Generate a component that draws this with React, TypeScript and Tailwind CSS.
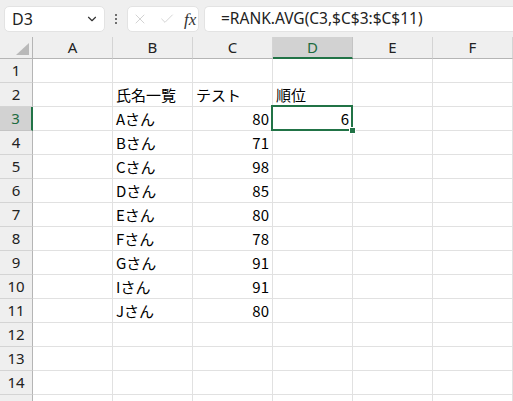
import { ChevronDown, X, Check } from 'lucide-react'

const cols = ['A', 'B', 'C', 'D', 'E', 'F']

// cells keyed by "col+row"
const cells: Record<string, { v: string; right?: boolean }> = {
  B2: { v: '氏名一覧' }, C2: { v: 'テスト' }, D2: { v: '順位' },
  B3: { v: 'Aさん' }, C3: { v: '80', right: true }, D3: { v: '6', right: true },
  B4: { v: 'Bさん' }, C4: { v: '71', right: true },
  B5: { v: 'Cさん' }, C5: { v: '98', right: true },
  B6: { v: 'Dさん' }, C6: { v: '85', right: true },
  B7: { v: 'Eさん' }, C7: { v: '80', right: true },
  B8: { v: 'Fさん' }, C8: { v: '78', right: true },
  B9: { v: 'Gさん' }, C9: { v: '91', right: true },
  B10: { v: 'Iさん' }, C10: { v: '91', right: true },
  B11: { v: 'Jさん' }, C11: { v: '80', right: true },
}

const ui = { fontFamily: '"Noto Sans", "Open Sans", sans-serif' }
const cellFont = { fontFamily: '"Noto Sans CJK JP", "Noto Sans", sans-serif' }

export default function App() {
  const rows = Array.from({ length: 15 }, (_, i) => i + 1)

  return (
    <div className="w-[513px] h-[401px] overflow-hidden bg-white text-[#222]" style={ui}>
      {/* formula bar */}
      <div className="h-[37px] bg-[#efefef] flex items-center pl-[4px] gap-[5px] pt-[1px]">
        <div className="w-[101px] h-[26px] bg-white rounded-[5px] border border-[#e3e3e3] flex items-center pl-[7px] pr-[5px]">
          <span className="text-[16px] flex-1 text-[#222]">D3</span>
          <ChevronDown className="w-[14px] h-[14px] text-[#333]" strokeWidth={2} />
        </div>
        <div className="flex flex-col gap-[2px] w-[12px] items-center">
          <span className="w-[2px] h-[2px] bg-[#444] rounded-full" />
          <span className="w-[2px] h-[2px] bg-[#444] rounded-full" />
          <span className="w-[2px] h-[2px] bg-[#444] rounded-full" />
        </div>
        <div className="w-[72px] h-[26px] bg-white rounded-[5px] border border-[#e3e3e3] flex items-center pl-[4px] gap-[1px]">
          <X className="w-[16px] h-[16px] text-[#c8c8c8]" strokeWidth={1.2} />
          <Check className="w-[16px] h-[16px] text-[#c8c8c8] ml-[10px]" strokeWidth={1.2} />
          <span className="ml-[8px] text-[17px] italic text-[#333] leading-none" style={{ fontFamily: '"Liberation Serif", serif' }}>
            fx
          </span>
        </div>
        <div className="flex-1 h-[26px] bg-white rounded-l-[5px] border border-r-0 border-[#e3e3e3] flex items-center pl-[16px]">
          <span className="text-[15.5px] text-[#222]">=RANK.AVG(C3,$C$3:$C$11)</span>
        </div>
      </div>

      {/* grid */}
      <div className="grid grid-cols-[33px_80px_80px_80px_80px_80px_80px]">
        {/* header row */}
        <div className="h-[22px] bg-[#efefef] border-r border-b border-[#b5b5b5] relative">
          <svg className="absolute left-[16px] top-[6px]" width="13" height="12" viewBox="0 0 13 12">
            <polygon points="13,0 13,12 0,12" fill="#b9b9b9" />
          </svg>
        </div>
        {cols.map(c => (
          <div
            key={c}
            className={
              c === 'D'
                ? 'h-[22px] bg-[#d2d2d2] border-r border-[#c4c4c4] border-b-2 border-b-[#217346] flex items-center justify-center text-[15px] text-[#1e6b40]'
                : 'h-[22px] bg-[#efefef] border-r border-[#d4d4d4] border-b border-b-[#b5b5b5] flex items-center justify-center text-[15px] text-[#222]'
            }
          >
            {c}
          </div>
        ))}

        {rows.map(r => (
          <Row key={r} r={r} />
        ))}
      </div>
    </div>
  )
}

function Row({ r }: { r: number }) {
  const sel = r === 3
  return (
    <>
      <div
        className={
          sel
            ? 'h-[24px] bg-[#d2d2d2] border-r-2 border-r-[#217346] border-b border-b-[#c4c4c4] flex items-center justify-center text-[15px] text-[#1e6b40]'
            : 'h-[24px] bg-[#efefef] border-r border-r-[#b5b5b5] border-b border-b-[#d4d4d4] flex items-center justify-center text-[15px] text-[#222]'
        }
      >
        {r < 15 ? r : ''}
      </div>
      {cols.map(c => {
        const cell = cells[c + r]
        const active = c === 'D' && sel
        return (
          <div
            key={c}
            className={
              'h-[24px] border-r border-b border-[#e1e1e1] relative flex items-center px-[3px] text-[15px] text-black ' +
              (cell?.right ? 'justify-end ' : 'justify-start ') +
              (active ? 'z-10' : '')
            }
            style={cellFont}
          >
            {cell && <span className="leading-none">{cell.v}</span>}
            {active && (
              <>
                <div className="absolute -left-[2px] -top-[2px] -right-[1px] -bottom-[1px] border-2 border-[#217346] pointer-events-none" />
                <div className="absolute -right-[4px] -bottom-[4px] w-[7px] h-[7px] bg-[#217346] border border-white" />
              </>
            )}
          </div>
        )
      })}
    </>
  )
}
